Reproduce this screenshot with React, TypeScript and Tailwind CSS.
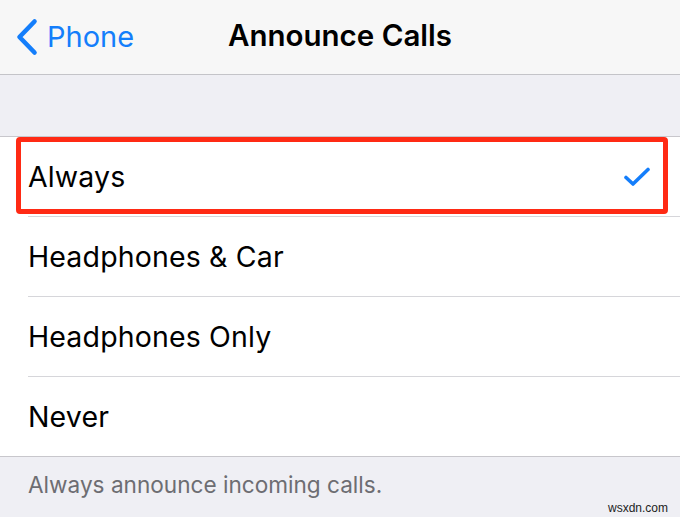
import React from 'react';

const options = ['Always', 'Headphones & Car', 'Headphones Only', 'Never'];

function Check() {
    return (
        <svg width="26" height="20" viewBox="0 0 26 20" className="text-[#147efb]">
            <path d="M2 10.5 L9 17 L24 2.5" fill="none" stroke="currentColor" strokeWidth="3.6" strokeLinecap="round" strokeLinejoin="round" />
        </svg>
    );
}

export default function App() {
    const selected = 'Always';

    return (
        <div
            className="w-[680px] h-[517px] bg-[#efeff4] overflow-hidden relative"
            style={{ fontFamily: 'Inter, "Noto Sans", sans-serif' }}
        >
            {/* nav bar */}
            <div className="h-[75px] bg-[#f7f7f7] border-b-[1.5px] border-[#c4c4c8] relative flex items-center justify-center">
                <div className="absolute left-[15px] top-0 h-full flex items-center gap-[8px] text-[#147efb]">
                    <svg width="24" height="38" viewBox="0 0 24 38">
                        <path d="M19.5 3.5 L4.5 19 L19.5 34.5" fill="none" stroke="currentColor" strokeWidth="4.6" strokeLinecap="round" strokeLinejoin="round" />
                    </svg>
                    <span className="text-[29px] leading-none pb-[2px]">Phone</span>
                </div>
                <h1 className="text-[29.5px] font-semibold text-black leading-none pb-[2px]">Announce Calls</h1>
            </div>

            {/* option group */}
            <div className="mt-[61px] bg-white border-t border-b border-[#c8c7cc]">
                {options.map((opt, i) => (
                    <div key={opt} className="relative">
                        <div className="h-[79px] pl-[28px] pr-[30px] flex items-center justify-between">
                            <span className="text-[28.5px] text-black tracking-[0.15px] leading-none pt-[2px]">{opt}</span>
                            {opt === selected && <Check />}
                        </div>
                        {i < options.length - 1 && <div className="ml-[28px] h-px bg-[#d6d6da]" />}
                        {opt === selected && (
                            <div className="absolute left-[16px] right-[12px] top-0 h-[77px] border-[5.5px] border-[#ff2a14] rounded-[4px] pointer-events-none" />
                        )}
                    </div>
                ))}
            </div>

            {/* footer */}
            <p className="pl-[28px] pt-[17px] text-[22.6px] text-[#6d6d72] leading-none">
                Always announce incoming calls.
            </p>

            <span
                className="absolute right-[12px] bottom-[3px] text-[12px] text-[#222] leading-none"
                style={{ fontFamily: '"Liberation Sans", sans-serif' }}
            >
                wsxdn.com
            </span>
        </div>
    );
}
